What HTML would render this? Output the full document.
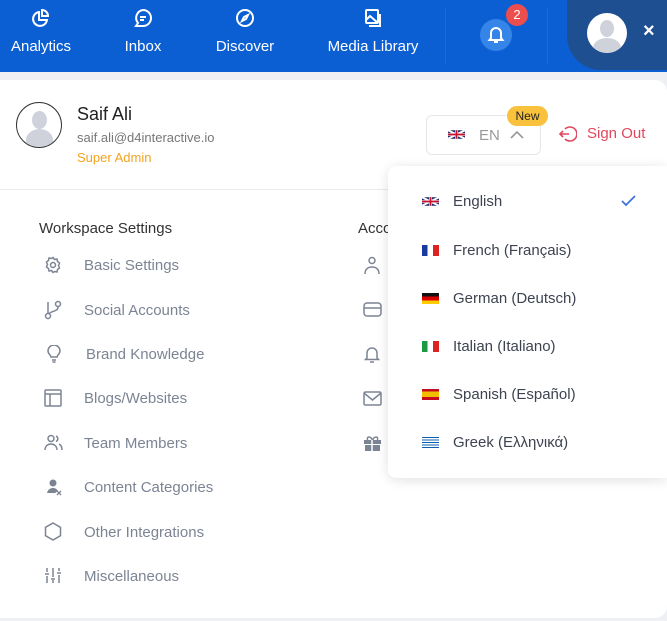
<!DOCTYPE html>
<html><head><meta charset="utf-8"><style>
*{margin:0;padding:0;box-sizing:border-box}
body{width:667px;height:621px;overflow:hidden;background:#eef0f3;font-family:"Liberation Sans","Noto Sans CJK SC",sans-serif;position:relative}
.hdr{position:absolute;left:0;top:0;width:667px;height:72px;background:#0c5fd3}
.nav{position:absolute;top:0;color:#fff;font-size:15px;text-align:center}
.nav svg{display:block;margin:8px auto 10px}
.av{position:absolute;left:567px;top:0;width:110px;height:70px;background:#1e4f91;border-radius:0 0 0 34px}
.card{position:absolute;left:0;top:80px;width:667px;height:538px;background:#fff;border-radius:0 12px 12px 0}
.t{position:absolute;white-space:nowrap}
.item{position:absolute;left:84px;font-size:15px;color:#7c8494;margin-top:1px}
.ic{position:absolute;left:44px}
.dd{position:absolute;left:388px;top:166px;width:279px;height:312px;background:#fff;border-radius:8px 0 0 8px;box-shadow:0 2px 12px rgba(0,0,0,.12)}
.lg{position:absolute;left:65px;font-size:15px;color:#3d4350;margin-top:1px}
.fl{position:absolute;left:34px;width:17px;height:11px}
</style></head><body>
<div class="hdr">
 <div class="nav" style="left:10px;width:62px"><svg width="20" height="20" viewBox="0 0 20 20" fill="none" stroke="#fff" stroke-width="2"><path d="M8 4a7 7 0 1 0 8 8H8z"/><path d="M11 2v6h6a6 6 0 0 0-6-6z"/></svg>Analytics</div>
 <div class="nav" style="left:120px;width:46px"><svg width="20" height="20" viewBox="0 0 20 20" fill="none" stroke="#fff" stroke-width="2"><path d="M10 2a8 8 0 0 1 0 16H3l2-3A8 8 0 0 1 10 2z"/><path d="M7 9h6M7 12h4"/></svg>Inbox</div>
 <div class="nav" style="left:214px;width:62px"><svg width="20" height="20" viewBox="0 0 20 20" fill="none" stroke="#fff" stroke-width="2"><circle cx="10" cy="10" r="8"/><path d="M13 7l-2 4-4 2 2-4z"/></svg>Discover</div>
 <div class="nav" style="left:326px;width:94px"><svg width="20" height="20" viewBox="0 0 20 20" fill="none" stroke="#fff" stroke-width="2"><rect x="3" y="2" width="12" height="13" rx="1"/><path d="M6 18h11V6M3 12l4-4 8 7"/></svg>Media Library</div>
 <div style="position:absolute;left:445px;top:8px;width:1px;height:56px;background:#1a6ad9"></div>
 <div style="position:absolute;left:547px;top:8px;width:1px;height:56px;background:#1a6ad9"></div>
 <div style="position:absolute;left:480px;top:19px;width:32px;height:32px;border-radius:50%;background:#3584e8"><svg style="position:absolute;left:7px;top:6px" width="18" height="19" viewBox="0 0 18 19" fill="none" stroke="#fff" stroke-width="2"><path d="M4 13V8a5 5 0 0 1 10 0v5l1.5 2h-13zM7 17h4"/></svg></div>
 <div style="position:absolute;left:506px;top:4px;width:22px;height:22px;border-radius:50%;background:#ec4e4e;color:#fff;font-size:13px;text-align:center;line-height:22px">2</div>
 <div class="av"><div style="position:absolute;left:20px;top:13px;width:40px;height:40px;border-radius:50%;background:#fff;overflow:hidden"><div style="position:absolute;left:13px;top:7px;width:14px;height:17px;border-radius:50%;background:#cfd2da"></div><div style="position:absolute;left:6px;top:25px;width:28px;height:20px;border-radius:50% 50% 0 0;background:#cfd2da"></div></div><div style="position:absolute;left:76px;top:20px;color:#fff;font-size:20px;font-weight:bold">×</div></div>
</div>
<div class="card">
 <div style="position:absolute;left:16px;top:22px;width:46px;height:46px;border-radius:50%;border:1px solid #333;overflow:hidden;background:#fff"><div style="position:absolute;left:15px;top:8px;width:15px;height:18px;border-radius:50%;background:#cfd2da"></div><div style="position:absolute;left:9px;top:26px;width:27px;height:22px;border-radius:50% 50% 0 0;background:#cfd2da"></div></div>
 <div class="t" style="left:77px;top:24px;font-size:18px;color:#222">Saif Ali</div>
 <div class="t" style="left:77px;top:50px;font-size:13px;color:#777">saif.ali@d4interactive.io</div>
 <div class="t" style="left:77px;top:70px;font-size:13px;color:#f2a320">Super Admin</div>
 <div style="position:absolute;left:426px;top:35px;width:115px;height:40px;border:1px solid #e4e6ea;border-radius:6px"></div>
 <svg style="position:absolute;left:448px;top:49px" width="17" height="11" viewBox="0 0 60 30"><rect width="60" height="30" fill="#1e2a6e"/><path d="M0 0L60 30M60 0L0 30" stroke="#fff" stroke-width="7"/><path d="M30 0v30M0 15h60" stroke="#fff" stroke-width="10"/><path d="M30 0v30M0 15h60" stroke="#c8102e" stroke-width="6"/></svg>
 <div class="t" style="left:479px;top:47px;font-size:15px;color:#999">EN</div>
 <svg style="position:absolute;left:510px;top:50px" width="14" height="9" viewBox="0 0 14 9" fill="none" stroke="#999" stroke-width="1.6"><path d="M1 8l6-6 6 6"/></svg>
 <div class="t" style="left:507px;top:26px;width:41px;height:20px;border-radius:10px;background:#f8c23c;font-size:12px;color:#222;text-align:center;line-height:20px">New</div>
 <svg style="position:absolute;left:559px;top:45px" width="18" height="18" viewBox="0 0 18 18" fill="none" stroke="#e0475f" stroke-width="1.6"><path d="M6 4a7 7 0 1 1 0 10M1 9h9M4 6L1 9l3 3"/></svg>
 <div class="t" style="left:587px;top:45px;font-size:15px;color:#e0475f">Sign Out</div>
 <div style="position:absolute;left:0;top:109px;width:388px;height:1px;background:#e8e9ec"></div>
 <div class="t" style="left:39px;top:140px;font-size:15px;color:#333">Workspace Settings</div>
 <div class="t" style="left:358px;top:140px;font-size:15px;color:#333">Acco</div>
</div>
<svg class="ic" style="top:256px" width="18" height="18" viewBox="0 0 18 18" fill="none" stroke="#7c8494" stroke-width="1.5"><circle cx="9" cy="9" r="2.5"/><path d="M9 1.5l1.5 2 2.5-.5.5 2.5 2 1.5-1 2.5 1 2.5-2 1.5-.5 2.5-2.5-.5L9 16.5l-1.5-2-2.5.5-.5-2.5-2-1.5 1-2.5-1-2.5 2-1.5.5-2.5 2.5.5z"/></svg>
<div class="item t" style="top:256px">Basic Settings</div>
<svg class="ic" style="top:300px" width="18" height="20" viewBox="0 0 18 20" fill="none" stroke="#7c8494" stroke-width="1.5"><circle cx="4" cy="16" r="2.5"/><circle cx="14" cy="4" r="2.5"/><path d="M4 2v11M14 7c0 5-8 4-9 7"/></svg>
<div class="item t" style="top:301px">Social Accounts</div>
<svg class="ic" style="left:47px;top:345px" width="14" height="18" viewBox="0 0 14 18" fill="none" stroke="#7c8494" stroke-width="1.5"><path d="M4 12c0-2-3-3-3-6a6 6 0 0 1 12 0c0 3-3 4-3 6zM5 15h4M5.5 17h3"/></svg>
<div class="item t" style="left:86px;top:345px">Brand Knowledge</div>
<svg class="ic" style="top:389px" width="18" height="18" viewBox="0 0 18 18" fill="none" stroke="#7c8494" stroke-width="1.5"><rect x="1" y="1" width="16" height="16" rx="1"/><path d="M1 5h16M6 5v12"/></svg>
<div class="item t" style="top:389px">Blogs/Websites</div>
<svg class="ic" style="top:434px" width="19" height="17" viewBox="0 0 19 17" fill="none" stroke="#7c8494" stroke-width="1.5"><circle cx="7" cy="4.5" r="3"/><path d="M1 16c0-4 3-6 6-6s6 2 6 6M12 2a3 3 0 0 1 0 5.5M15 10c2 1 3 3 3 6"/></svg>
<div class="item t" style="top:434px">Team Members</div>
<svg class="ic" style="left:46px;top:478px" width="16" height="18" viewBox="0 0 16 18"><circle cx="7" cy="5" r="3.5" fill="#7c8494"/><path d="M1 15c1-4 4-5 6-5s4 1 5 3l-3 2z" fill="#7c8494"/><path d="M11 13l4 4M15 13l-4 4" stroke="#7c8494" stroke-width="1.3"/></svg>
<div class="item t" style="top:478px">Content Categories</div>
<svg class="ic" style="top:522px" width="18" height="19" viewBox="0 0 18 19" fill="none" stroke="#7c8494" stroke-width="1.5"><path d="M9 1l7.5 4.3v8.4L9 18 1.5 13.7V5.3z"/></svg>
<div class="item t" style="top:523px">Other Integrations</div>
<svg class="ic" style="top:567px" width="18" height="17" viewBox="0 0 18 17" fill="none" stroke="#7c8494" stroke-width="1.5"><path d="M3 1v4M3 9v7M1 7h4M9 1v9M9 13v3M7 12h4M15 1v3M15 8v8M13 6h4"/></svg>
<div class="item t" style="top:567px">Miscellaneous</div>
<svg style="position:absolute;left:363px;top:256px" width="18" height="19" viewBox="0 0 18 19" fill="none" stroke="#7c8494" stroke-width="1.5"><circle cx="9" cy="4.5" r="3"/><path d="M2 18c0-5 3-7 7-7s7 2 7 7"/></svg>
<svg style="position:absolute;left:363px;top:302px" width="19" height="15" viewBox="0 0 19 15" fill="none" stroke="#7c8494" stroke-width="1.5"><rect x="1" y="1" width="17" height="13" rx="3"/><path d="M1 6h17"/></svg>
<svg style="position:absolute;left:364px;top:345px" width="16" height="18" viewBox="0 0 16 18" fill="none" stroke="#7c8494" stroke-width="1.5"><path d="M3 13V8a5 5 0 0 1 10 0v5l1.5 1.5h-13zM6 17h4"/></svg>
<svg style="position:absolute;left:363px;top:391px" width="19" height="15" viewBox="0 0 19 15" fill="none" stroke="#7c8494" stroke-width="1.5"><rect x="1" y="1" width="17" height="13" rx="1.5"/><path d="M1 2l8.5 7 8.5-7"/></svg>
<svg style="position:absolute;left:363px;top:435px" width="19" height="16" viewBox="0 0 19 16"><path d="M1 5h17v4H1zM2 10h15v6H2z" fill="#7c8494"/><path d="M9.5 5c-2-4-6-4-5 0M9.5 5c2-4 6-4 5 0" stroke="#7c8494" stroke-width="1.5" fill="none"/><path d="M9 5v11" stroke="#fff" stroke-width="1.5"/></svg>
<div class="dd">
 <svg class="fl" style="top:30px" viewBox="0 0 60 30"><rect width="60" height="30" fill="#1e2a6e"/><path d="M0 0L60 30M60 0L0 30" stroke="#fff" stroke-width="7"/><path d="M30 0v30M0 15h60" stroke="#fff" stroke-width="10"/><path d="M30 0v30M0 15h60" stroke="#c8102e" stroke-width="6"/></svg>
 <div class="lg t" style="top:26px">English</div>
 <svg style="position:absolute;left:233px;top:29px" width="15" height="12" viewBox="0 0 15 12" fill="none" stroke="#3a6fe0" stroke-width="1.7"><path d="M1 6l4 4 9-9"/></svg>
 <div class="fl" style="top:79px;background:linear-gradient(90deg,#1b3aa0 33%,#fff 33% 66%,#d22 66%)"></div>
 <div class="lg t" style="top:75px">French (Français)</div>
 <div class="fl" style="top:127px;background:linear-gradient(#111 33%,#d00 33% 66%,#fc0 66%)"></div>
 <div class="lg t" style="top:123px">German (Deutsch)</div>
 <div class="fl" style="top:175px;background:linear-gradient(90deg,#1a9a44 33%,#fff 33% 66%,#d22 66%)"></div>
 <div class="lg t" style="top:171px">Italian (Italiano)</div>
 <div class="fl" style="top:223px;background:linear-gradient(#c60b1e 25%,#f1bf00 25% 75%,#c60b1e 75%)"></div>
 <div class="lg t" style="top:219px">Spanish (Español)</div>
 <div class="fl" style="top:271px;background:repeating-linear-gradient(#0d5eaf 0 1.25px,#fff 1.25px 2.5px)"></div>
 <div class="lg t" style="top:267px">Greek (Ελληνικά)</div>
</div>
</body></html>
